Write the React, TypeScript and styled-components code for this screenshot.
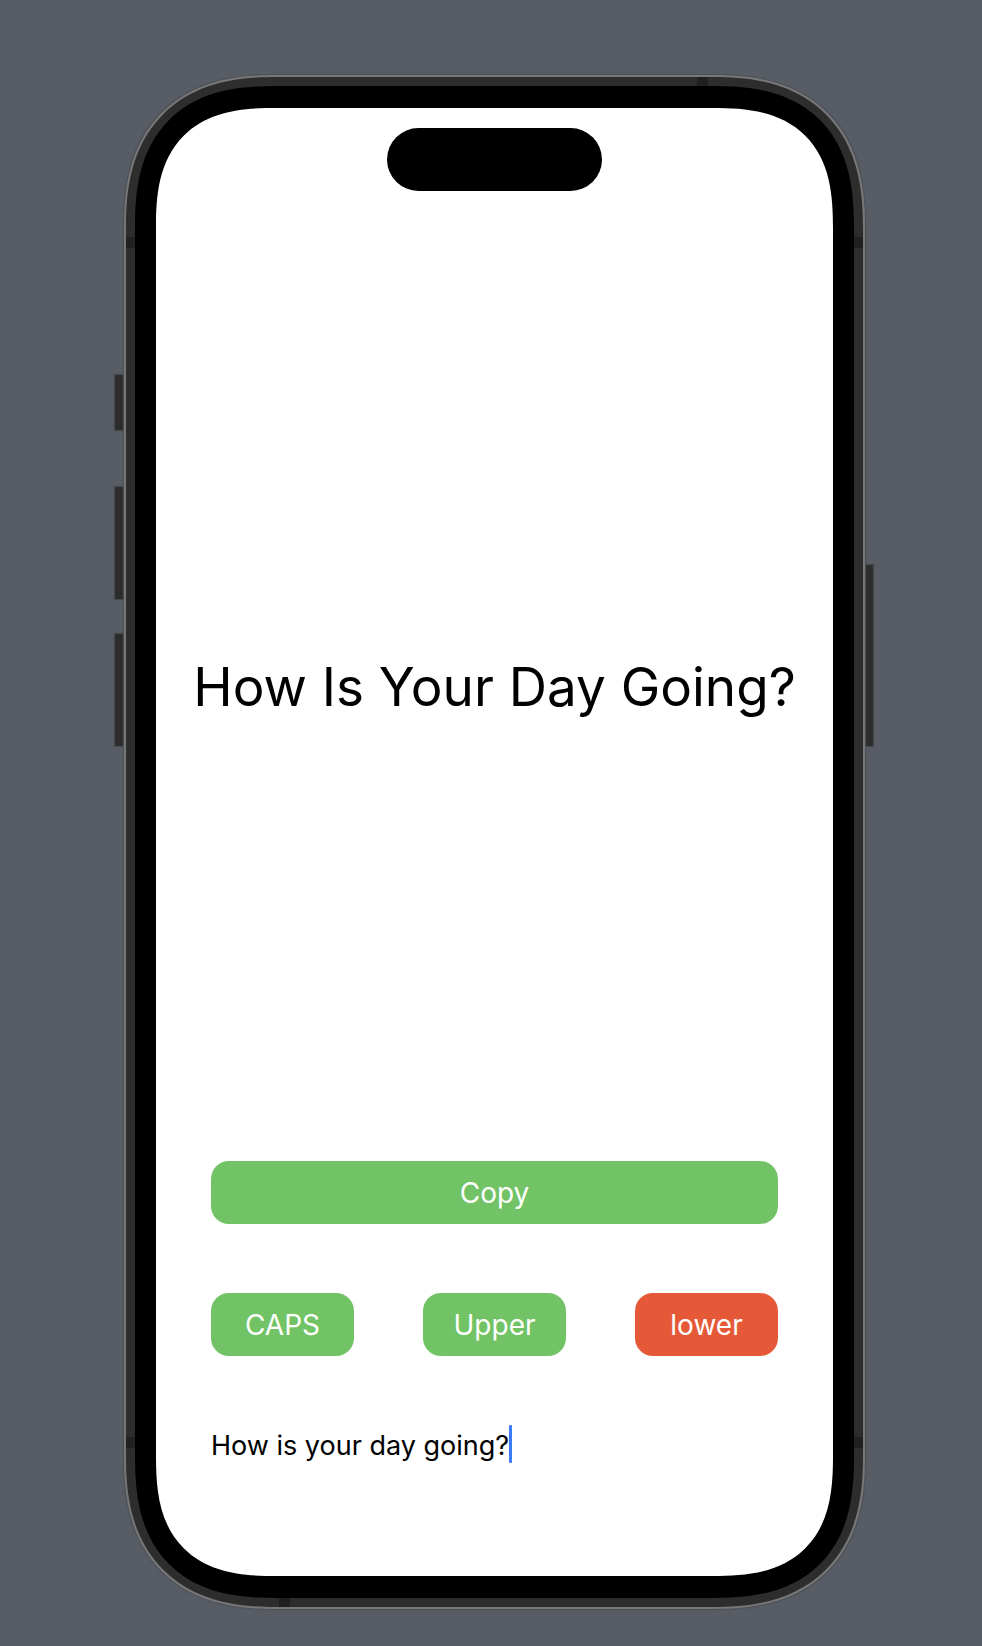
import React, { useState } from "react";
import styled, { createGlobalStyle } from "styled-components";

const GlobalStyle = createGlobalStyle`
  *, *::before, *::after { box-sizing: border-box; }
  body {
    margin: 0;
    background: #585c64;
    font-family: Inter, "Liberation Sans", sans-serif;
  }
`;

const Page = styled.main`
  display: flex;
  min-height: 100vh;
  padding: 75px 109px 37px 115px;
`;

const Rail = styled.div<{ $width: number; $top: number }>`
  display: flex;
  flex-direction: column;
  flex: none;
  width: ${(p) => p.$width}px;
  padding-top: ${(p) => p.$top}px;
`;

const SideKey = styled.div<{ $height: number; $gap?: number }>`
  height: ${(p) => p.$height}px;
  margin-bottom: ${(p) => p.$gap ?? 0}px;
  background: #2d2d2d;
  box-shadow: 0 0 1px 1px #484b50;
`;

const Shell = styled.div<{ $radius: number; $plain: number; $curve: number }>`
  display: flex;
  flex: 1;
  min-width: 0;
  border-radius: ${(p) => p.$plain}px;
  @supports (corner-shape: superellipse(1.4)) {
    border-radius: ${(p) => p.$radius}px;
    corner-shape: superellipse(${(p) => p.$curve});
  }
`;

const Rim = styled(Shell)`
  position: relative;
  padding: 2px;
  background: #777777;
  box-shadow: 0 0 1px 1px #4d5158;
`;

const Frame = styled(Shell)`
  padding: 9px;
  background: #2d2d2d;
`;

const Bezel = styled(Shell)`
  padding: 22px 21px;
  background: #000000;
`;

const Screen = styled(Shell)`
  flex-direction: column;
  overflow: hidden;
  padding-bottom: 113px;
  background: #ffffff;
`;

const Band = styled.i<{ $side: "left" | "right" | "top" | "bottom"; $at: string }>`
  position: absolute;
  background: #202020;
  ${(p) => p.$side}: 2px;
  ${(p) =>
    p.$side === "left" || p.$side === "right"
      ? `${p.$at}; width: 9px; height: 11px;`
      : `${p.$at}; width: 11px; height: 9px;`}
`;

const StatusArea = styled.header`
  display: flex;
  flex: none;
  justify-content: center;
  height: 105px;
  padding-top: 20px;
`;

const Island = styled.div`
  width: 215px;
  height: 63px;
  border-radius: 32px;
  background: #000000;
`;

const Stage = styled.section`
  display: flex;
  flex: 1;
  align-items: center;
  justify-content: center;
`;

const Title = styled.h1`
  margin: 0;
  font-size: 53px;
  font-weight: 400;
  line-height: 70px;
  white-space: nowrap;
  color: #000000;
`;

const Controls = styled.form`
  display: flex;
  flex-direction: column;
  gap: 69px;
  padding: 0 55px;
`;

const ButtonRow = styled.div`
  display: grid;
  grid-template-columns: repeat(3, 1fr);
  gap: 69px;
`;

const ActionButton = styled.button<{ $active?: boolean }>`
  height: 63px;
  padding: 0;
  border: 0;
  border-radius: 18px;
  background: ${(p) => (p.$active ? "#e55938" : "#71c365")};
  color: #ffffff;
  font: 400 28px/38px Inter, "Liberation Sans", sans-serif;
  cursor: pointer;
`;

const Field = styled.label`
  display: flex;
  height: 38px;
`;

const TextInput = styled.input`
  field-sizing: content;
  min-width: 0;
  height: 38px;
  padding: 2px 0 0;
  border: 0;
  outline: 0;
  background: transparent;
  color: #000000;
  caret-color: transparent;
  font: 400 27px/36px Inter, "Liberation Sans", sans-serif;
`;

const Caret = styled.span`
  flex: none;
  width: 3px;
  border-radius: 1px;
  background: #3b7bf6;
`;

const capitalize = (s: string) => s.replace(/\b\w/g, (c) => c.toUpperCase());

export default function App() {
  const [text, setText] = useState("How is your day going?");
  const [shown, setShown] = useState("How Is Your Day Going?");

  return (
    <>
      <GlobalStyle />
      <Page>
        <Rail $width={9} $top={300}>
          <SideKey $height={55} $gap={57} />
          <SideKey $height={112} $gap={35} />
          <SideKey $height={112} />
        </Rail>
        <Rim $radius={152} $plain={127} $curve={1.28}>
          <Frame $radius={150} $plain={125} $curve={1.28}>
            <Bezel $radius={142} $plain={116} $curve={1.34}>
              <Screen $radius={120} $plain={95} $curve={1.4}>
                <StatusArea>
                  <Island />
                </StatusArea>
                <Stage>
                  <Title>{shown}</Title>
                </Stage>
                <Controls onSubmit={(e) => e.preventDefault()}>
                  <ActionButton type="button" onClick={() => navigator.clipboard?.writeText(shown)}>
                    Copy
                  </ActionButton>
                  <ButtonRow>
                    <ActionButton type="button" onClick={() => setShown(text.toUpperCase())}>
                      CAPS
                    </ActionButton>
                    <ActionButton type="button" onClick={() => setShown(capitalize(text))}>
                      Upper
                    </ActionButton>
                    <ActionButton type="button" $active onClick={() => setShown(text.toLowerCase())}>
                      lower
                    </ActionButton>
                  </ButtonRow>
                  <Field>
                    <TextInput
                      aria-label="Text to convert"
                      value={text}
                      onChange={(e) => setText(e.target.value)}
                    />
                    <Caret />
                  </Field>
                </Controls>
              </Screen>
            </Bezel>
          </Frame>
          <Band $side="left" $at="top: 162px" />
          <Band $side="right" $at="top: 162px" />
          <Band $side="left" $at="bottom: 161px" />
          <Band $side="right" $at="bottom: 161px" />
          <Band $side="top" $at="right: 157px" />
          <Band $side="bottom" $at="left: 155px" />
        </Rim>
        <Rail $width={8} $top={490}>
          <SideKey $height={181} />
        </Rail>
      </Page>
    </>
  );
}
